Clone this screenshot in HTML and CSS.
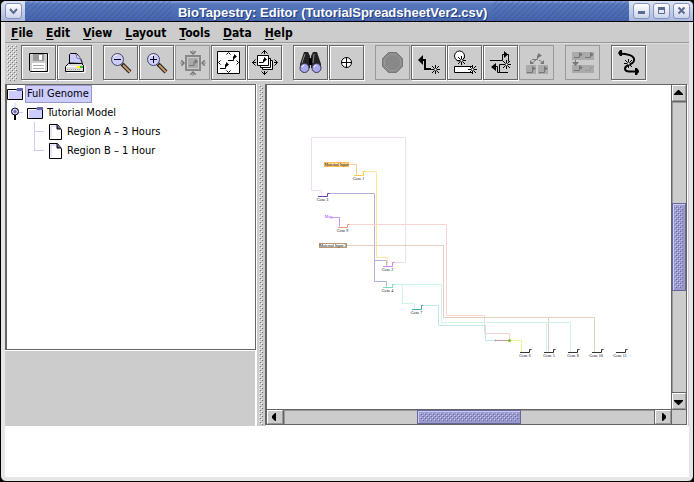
FILE: index.html
```
<!DOCTYPE html>
<html lang="en">
<head>
    <meta charset="UTF-8">
    <meta name="viewport" content="width=device-width, initial-scale=1.0">
    <title>BioTapestry: Editor (TutorialSpreadsheetVer2.csv)</title>
    <link rel="stylesheet" href="styles.css">
</head>
<body>
    <div class="window">
        <header class="titlebar">
            <div class="caps">
                <button class="cap" aria-label="Window menu"><svg viewBox="0 0 15 14"><path d="M4 5l3.500 4L11 5" fill="none" stroke="#5c6a94" stroke-width="2"/></svg></button>
            </div>
            <div class="hatch hatch-left"></div>
            <h1>BioTapestry: Editor (TutorialSpreadsheetVer2.csv)</h1>
            <div class="hatch hatch-right"></div>
            <div class="caps">
                <button class="cap" aria-label="Minimize"><svg viewBox="0 0 15 14"><path d="M4 7h7v3H4z" fill="#5c6a94"/></svg></button>
                <button class="cap" aria-label="Maximize"><svg viewBox="0 0 15 14"><path d="M4.500 4v5.500h6V4" fill="none" stroke="#5c6a94"/><path d="M4 3h7v3H4z" fill="#5c6a94"/></svg></button>
                <button class="cap" aria-label="Close"><svg viewBox="0 0 15 14"><path d="M4.500 3.500l6 6m0-6l-6 6" stroke="#5c6a94" stroke-width="2"/></svg></button>
            </div>
        </header>

        <div class="client">
            <nav class="menubar">
                <button><u>F</u>ile</button>
                <button><u>E</u>dit</button>
                <button><u>V</u>iew</button>
                <button><u>L</u>ayout</button>
                <button><u>T</u>ools</button>
                <button><u>D</u>ata</button>
                <button><u>H</u>elp</button>
            </nav>

            <div class="toolbar">
                <div class="grip"></div>
                <div class="group">
                    <button aria-label="Save">
                        <svg viewBox="0 0 33 33">
                            <path d="M7.500 7.500h18v18h-17l-1-1z" fill="#ccc" stroke="#000"/>
                            <path d="M11 8h11v7H11z" fill="#999"/><path d="M17 9h3v5h-3z" fill="#fff"/>
                            <path d="M10 17h13v8H10z" fill="#fff"/><path d="M11 19.500h11M11 22.500h11" stroke="#aaa"/>
                            <path d="M26.500 8v18.500H9" fill="none" stroke="#fff"/>
                        </svg>
                    </button>
                    <button aria-label="Print">
                        <svg viewBox="0 0 33 33">
                            <path d="M11.500 17V8.500l1-1h6l4 5 2 5z" fill="#ccf" stroke="#000"/>
                            <path d="M18 8l1 4 4 1" fill="#fff" stroke="#66c"/>
                            <path d="M10.500 17.500h13l2 2v6h-18v-5z" fill="#ddd" stroke="#000"/>
                            <path d="M8 20.500h17" stroke="#fff"/><path d="M9 23.500h14" stroke="#999" stroke-dasharray="1 1"/>
                            <path d="M19 20h4v2h-4z" fill="#ff0"/><path d="M22 20h3v2h-3z" fill="#3b3"/>
                            <path d="M27 19v7.500H9" fill="none" stroke="#fff"/>
                        </svg>
                    </button>
                </div>
                <div class="group">
                    <button aria-label="Zoom out">
                        <svg viewBox="0 0 33 33">
                            <path d="M18 18l8 8" stroke="#222" stroke-width="4"/><path d="M19 19l7 7" stroke="#c96" stroke-width="2"/>
                            <circle cx="13.500" cy="13.500" r="6" fill="#ccf" stroke="#446"/><path d="M9.500 11a5 5 0 0 1 4-2" fill="none" stroke="#fff"/>
                            <path d="M10 13.500h7" stroke="#000"/>
                        </svg>
                    </button>
                    <button aria-label="Zoom in">
                        <svg viewBox="0 0 33 33">
                            <path d="M18 18l8 8" stroke="#222" stroke-width="4"/><path d="M19 19l7 7" stroke="#c96" stroke-width="2"/>
                            <circle cx="13.500" cy="13.500" r="6" fill="#ccf" stroke="#446"/><path d="M9.500 11a5 5 0 0 1 4-2" fill="none" stroke="#fff"/>
                            <path d="M10 13.500h7M13.500 10v7" stroke="#000"/>
                        </svg>
                    </button>
                    <button aria-label="Zoom to selection" disabled>
                        <svg viewBox="0 0 33 33">
                            <path d="M10 10h14v14H10z" fill="none" stroke="#888" stroke-width="2"/>
                            <path d="M12 12h10v10H12z" fill="#aaa"/><path d="M13 19.500h5v-4h1" fill="none" stroke="#777"/><path d="M19 13l3 2.500-3 2.500z" fill="#777"/>
                            <path d="M17 4v3M17 30v-3M4 17h3M30 17h-3" stroke="#888"/>
                            <path d="M14 5h1l2 2 2-2h1v1l-3 3-3-3zM14 29h1l2-2 2 2h1v-1l-3-3-3 3zM5 14v1l2 2-2 2v1h1l3-3-3-3zM29 14v1l-2 2 2 2v1h-1l-3-3 3-3z" fill="#777"/>
                        </svg>
                    </button>
                    <button aria-label="Zoom to model">
                        <svg viewBox="0 0 33 33">
                            <path d="M5.500 5.500h22v22h-22z" fill="#fff" stroke="#000"/>
                            <path d="M16 14.500h5.500v-4h1M8 22.500h5.500v-4h1" fill="none" stroke="#000"/>
                            <path d="M22 8l3 2.500-3 2.500zM14 16l3 2.500-3 2.500z"/>
                            <path d="M14.500 8.500l2-2 2 2M14.500 24.500l2 2 2-2M8.500 14.500l-2 2 2 2M24.500 14.500l2 2-2 2" fill="none" stroke="#000"/>
                        </svg>
                    </button>
                    <button aria-label="Zoom to all models">
                        <svg viewBox="0 0 33 33">
                            <path d="M14.500 14.500h10v9h-10z" fill="#fff" stroke="#000"/>
                            <path d="M12.500 12.500h10v9h-10z" fill="#fff" stroke="#000"/>
                            <path d="M9.500 9.500h11v10h-11z" fill="#fff" stroke="#000"/>
                            <path d="M11 16.500h4.500v-3h1" fill="none" stroke="#000"/><path d="M16 11l3 2.500-3 2.500z"/>
                            <path d="M16.500 4v4M16.500 29v-4M4 16.500h4M29 16.500h-3" stroke="#000"/>
                            <path d="M13.500 7.500l3-3 3 3M13.500 25.500l3 3 3-3M7.500 13.500l-3 3 3 3M26.500 13.500l3 3-3 3" fill="none" stroke="#000"/>
                        </svg>
                    </button>
                </div>
                <div class="group">
                    <button aria-label="Search">
                        <svg viewBox="0 0 33 33">
                            <path d="M10 6h4l2 4v12H6v-4zM19 6h4l4 12v4H17V10z" fill="#222"/><path d="M15 12h3v7h-3z" fill="#000"/>
                            <path d="M11 8l-3 9M20 8l-1 9" stroke="#888"/>
                            <circle cx="10.500" cy="22" r="4.500" fill="#aae" stroke="#335"/><circle cx="22.500" cy="22" r="4.500" fill="#aae" stroke="#335"/>
                            <path d="M8 21l2-2M20 21l2-2" stroke="#fff"/>
                        </svg>
                    </button>
                    <button aria-label="Center on selected">
                        <svg viewBox="0 0 33 33">
                            <circle cx="16.500" cy="16.500" r="5" fill="#fff" stroke="#000"/>
                            <path d="M11 16.500h11M16.500 11v11" stroke="#000"/>
                        </svg>
                    </button>
                </div>
                <div class="group">
                    <button aria-label="Cancel add" disabled>
                        <svg viewBox="0 0 33 33">
                            <path d="M12.500 6.500h8l6 6v8l-6 6h-8l-6-6v-8z" fill="#888" stroke="#777"/>
                            <path d="M13.500 8.500h6l5 5v6l-5 5h-6l-5-5v-6z" fill="none" stroke="#999"/>
                        </svg>
                    </button>
                    <button aria-label="Add gene">
                        <svg viewBox="0 0 33 33">
                            <path d="M10 13h4v9h5v2h-7v-9h-2z"/><path d="M11 9v10l-5-5z"/>
                            <path d="M23.500 19v9M19 23.500h9M20 20l7 7m0-7l-7 7" stroke="#000"/><path d="M22.500 22.500h2v2h-2z" fill="#fff"/>
                        </svg>
                    </button>
                    <button aria-label="Add node">
                        <svg viewBox="0 0 33 33">
                            <circle cx="11.500" cy="10" r="5" fill="#fff" stroke="#000"/>
                            <path d="M6.500 20.500h18v6h-18z" fill="#fff" stroke="#000"/>
                            <path d="M13.500 10v9M9 14.500h9M10 11l7 7m0-7l-7 7M24.500 19v9M20 23.500h9M21 20l7 7m0-7l-7 7" stroke="#000"/>
                            <path d="M12.500 13.500h2v2h-2zM23.500 22.500h2v2h-2z" fill="#fff"/>
                        </svg>
                    </button>
                    <button aria-label="Add link">
                        <svg viewBox="0 0 33 33">
                            <path d="M6 14.500h12.500v-6h6v7M11 20.500h2.500v6H24M15.500 27v-8.500h5" fill="none" stroke="#000"/>
                            <path d="M20 5v7l4-3.500zM12 17v8l-5-4z"/>
                            <path d="M22.500 14v9M18 18.500h9M19 15l7 7m0-7l-7 7" stroke="#000"/><path d="M21.500 17.500h2v2h-2z" fill="#fff"/>
                        </svg>
                    </button>
                    <button aria-label="Propagate down" disabled>
                        <svg viewBox="0 0 33 33">
                            <path d="M6 19h10v9H6zM18 19h10v9H18z" fill="#aaa"/>
                            <path d="M12 13.500h5.500v-4h1M16 14l-4 3M19 14l4 3M7 26.500h5.500v-4M19 26.500h5.500v-4" fill="none" stroke="#777"/>
                            <path d="M18 7l4 2.500-4 2.500zM10 14v4h4zM24 14v4h-4zM12 20l4 2.500-4 2.500zM24 20l4 2.500-4 2.500z" fill="#777"/>
                        </svg>
                    </button>
                </div>
                <div class="group">
                    <button aria-label="Pull down" disabled>
                        <svg viewBox="0 0 33 33">
                            <path d="M6 6h22v8H6zM6 19h22v8H6z" fill="#aaa"/>
                            <path d="M8 11.500h5.500v-3M19 11.500h5.500v-3M9.500 14v5M8 24.500h5.500v-3" fill="none" stroke="#777"/>
                            <path d="M13 6l4 2.500-4 2.500zM24 6l4 2.500-4 2.500zM6 16h7l-3.500 4zM13 19l4 2.500-4 2.500z" fill="#777"/>
                            <path d="M19 24.500h5.500v-3h2" fill="none" stroke="#999"/>
                        </svg>
                    </button>
                </div>
                <div class="group">
                    <button aria-label="Relayout link">
                        <svg viewBox="0 0 33 33">
                            <path d="M7 7.500c8 0 16 2 15 7 0 4-9 4-9 8s5 3 14 3" fill="none" stroke="#000" stroke-width="2"/>
                            <path d="M8 4h2v6H8L6 7zM23 22h2l2 3-2 4h-2z"/>
                            <path d="M16.500 13v9M12 17.500h9M13 14l7 7m0-7l-7 7" stroke="#000"/><path d="M15.500 16.500h2v2h-2z" fill="#fff"/>
                        </svg>
                    </button>
                </div>
            </div>

            <main class="workspace">
                <section class="sidebar">
                    <ul class="tree">
                        <li>
                            <div class="node root">
                                <svg class="folder" viewBox="0 0 16 14"><path d="M.500 2.500h9l1-1h5v11H.500z" fill="#ccf" stroke="#000"/><path d="M10 1h6v3H9z" fill="#66a"/><path d="M1.500 12V3.500h8" fill="none" stroke="#fff"/></svg>
                                <span class="selected">Full Genome</span>
                            </div>
                            <ul class="models">
                                <li>
                                    <div class="node">
                                        <svg class="handle" viewBox="0 0 16 19"><path d="M8 0v4M10 9.500h6" stroke="#ccf"/><path d="M7 12h2v5H7z"/><circle cx="8" cy="8.500" r="3.500" fill="#ccf" stroke="#000"/><circle cx="8" cy="8.500" r="1.500" fill="#66a"/></svg>
                                        <svg class="folder" viewBox="0 0 16 14"><path d="M.500 2.500h9l1-1h5v11H.500z" fill="#ccf" stroke="#000"/><path d="M10 1h6v3H9z" fill="#66a"/><path d="M1.500 12V3.500h8" fill="none" stroke="#fff"/></svg>
                                        <span>Tutorial Model</span>
                                    </div>
                                    <ul class="regions">
                                        <li class="node">
                                            <svg class="page" viewBox="0 0 13 16"><path d="M.500.500h8l4 5v10H.500z" fill="#fff" stroke="#000"/><path d="M2 14V2h5" fill="none" stroke="#ccf"/><path d="M8 1v4h4" fill="#66a" stroke="#000"/></svg>
                                            <span>Region A – 3 Hours</span>
                                        </li>
                                        <li class="node">
                                            <svg class="page" viewBox="0 0 13 16"><path d="M.500.500h8l4 5v10H.500z" fill="#fff" stroke="#000"/><path d="M2 14V2h5" fill="none" stroke="#ccf"/><path d="M8 1v4h4" fill="#66a" stroke="#000"/></svg>
                                            <span>Region B – 1 Hour</span>
                                        </li>
                                    </ul>
                                </li>
                            </ul>
                        </li>
                    </ul>
                    <div class="navigator"></div>
                </section>

                <div class="divider"></div>

                <section class="canvas">
                    <svg class="network" viewBox="267 85 404 324">
                        <g class="links">
                            <path stroke="#eedcf2" d="M393 262.500h12.500v-125h-94v53h10v5"/>
                            <path stroke="#fc9" d="M349 164.500h7.500v10"/>
                            <path stroke="#ffe699" d="M364 171.500h12.500v86h11v8"/>
                            <path stroke="#b3b0d9" d="M328 193.500h46.500v88h12v5M374.500 260.500h12v5"/>
                            <path stroke="#c9f" d="M332 217.500h7.500v9"/>
                            <path stroke="#fad4d0" d="M348 224.500h98.500v91h38v18h25v7"/>
                            <path stroke="#e3cfbd" d="M347 245.500h96.500v72h151v34M548.500 317.500v34"/>
                            <path stroke="#cff5e6" d="M393 284.500h48.500v38h129v29M546.500 322.500v29M402.500 284.500v19h12v5"/>
                            <path stroke="#c4e6ee" d="M422 305.500h16.500v20h47v15h10"/>
                            <path stroke="#c99" d="M496 340.500h13"/>
                            <path stroke="#df8" d="M510 340.500h11.500v11"/>
                        </g>
                        <g class="genes">
                            <path stroke="#fc4" d="M354 175.500h9.500v-4h2"/>
                            <path stroke="#64a" d="M318 196.500h9.500v-3h2"/>
                            <path stroke="#e98" d="M338 227.500h9.500v-3h2"/>
                            <path stroke="#c8e" d="M383 266.500h9.500v-4h2"/>
                            <path stroke="#7db" d="M383 287.500h9.500v-3h2"/>
                            <path stroke="#4ab" d="M412 309.500h9.500v-4h2"/>
                            <path stroke="#333" d="M520 352.500h9.500v-3h2M544 352.500h9.500v-3h2M568 352.500h9.500v-3h2M592 352.500h9.500v-3h2M616 352.500h9.500v-3h2"/>
                        </g>
                        <circle cx="495.500" cy="340.500" r="1" fill="#aaa"/>
                        <circle cx="509.500" cy="340.500" r="1.500" fill="#8b2"/>
                        <rect x="324.500" y="162.500" width="24" height="4" fill="#fd9" stroke="#fb5"/>
                        <rect x="319.500" y="243.500" width="27" height="4" fill="#fff" stroke="#b97"/>
                        <g class="labels">
                            <text x="336.500" y="166">Maternal Input</text>
                            <text x="358.500" y="180">Gene 1</text>
                            <text x="322.500" y="201">Gene 3</text>
                            <text x="328.500" y="218" fill="#93f">Mag</text>
                            <text x="342.500" y="232">Gene 9</text>
                            <text x="333" y="247">Maternal Input 2</text>
                            <text x="387.500" y="271">Gene 2</text>
                            <text x="387.500" y="292">Gene 4</text>
                            <text x="416.500" y="314">Gene 7</text>
                            <text x="525" y="357">Gene 6</text>
                            <text x="549" y="357">Gene 5</text>
                            <text x="573" y="357">Gene 8</text>
                            <text x="596" y="357">Gene 10</text>
                            <text x="620" y="357">Gene 11</text>
                        </g>
                    </svg>
                    <div class="scroll vertical">
                        <button aria-label="Scroll up"><svg viewBox="0 0 12 14"><path d="M1 9h9V8L6 4H5L1 8z"/></svg></button>
                        <div class="track"><div class="thumb"></div></div>
                        <button aria-label="Scroll down"><svg viewBox="0 0 12 14"><path d="M1 6h9v1l-4 4H5L1 7z"/></svg></button>
                    </div>
                    <div class="scroll horizontal">
                        <button aria-label="Scroll left"><svg viewBox="0 0 14 12"><path d="M8 2v8H7L4 7V5l3-3z"/></svg></button>
                        <div class="track"><div class="thumb"></div></div>
                        <button aria-label="Scroll right"><svg viewBox="0 0 14 12"><path d="M6 2v8h1l3-3V5L7 2z"/></svg></button>
                    </div>
                    <div class="corner"></div>
                </section>
            </main>
            <footer class="message"></footer>
        </div>
    </div>
</body>
</html>
```
FILE: styles.css
```
* {
    box-sizing: border-box;
}
body {
    margin: 0;
    background: #000;
    color: #000;
    font-family: "DejaVu Sans Condensed", "DejaVu Sans", sans-serif;
    font-size: 11px;
}
button {
    margin: 0;
    padding: 0;
    border: 0;
    font: inherit;
    color: inherit;
    background: #ccc;
}
svg {
    display: block;
}
ul {
    list-style: none;
    margin: 0;
    padding: 0;
}
.window {
    display: flex;
    flex-direction: column;
    min-height: 100vh;
    border: 1px solid #000;
    border-radius: 6px;
    background: #e6e6e6;
    overflow: hidden;
}

/* title bar */
.titlebar {
    display: flex;
    height: 21px;
    border-bottom: 1px solid #000;
    background: linear-gradient(#88a4dc, #5878bc 3px, #4464ac);
}
.titlebar h1 {
    margin: 0;
    padding: 0 6px;
    font-family: "Liberation Sans", Arial, sans-serif;
    font-size: 13px;
    line-height: 23px;
    color: #fff;
    text-shadow: 1px 1px #223a78;
    white-space: nowrap;
}
.hatch {
    background: repeating-linear-gradient(135deg, transparent 0, transparent 2px, #36529480 3px, transparent 4px);
}
.hatch-left {
    flex: 13;
}
.hatch-right {
    flex: 12;
}
.caps {
    display: flex;
    gap: 3px;
    padding: 2px 3px 2px 4px;
    background: linear-gradient(#dde3f2, #aab8dc);
}
.cap {
    width: 17px;
    height: 16px;
    border: 1px solid #8494c0;
    border-radius: 3px;
    background: linear-gradient(#fff, #ccd4ea);
}

/* menu and tool bars */
.client {
    flex: 1;
    display: flex;
    flex-direction: column;
    margin: 0 4px 4px;
    background: #ccc;
}
.menubar {
    display: flex;
    gap: 13px;
    height: 21px;
    padding: 1px 6px 0;
    border-bottom: 1px solid #999;
}
.menubar button {
    font-weight: bold;
    font-size: 12px;
}
.menubar u {
    text-underline-offset: 2px;
}
.toolbar {
    display: flex;
    gap: 11px;
    height: 41px;
    padding: 1px 2px;
    border-top: 1px solid #ddd;
}
.grip {
    width: 10px;
    height: 36px;
    margin-right: -7px;
}
.grip, .divider, .thumb::before {
    background-image:
        conic-gradient(at 1px 1px, transparent 75%, #fff 0),
        conic-gradient(at 1px 1px, transparent 75%, #fff 0),
        conic-gradient(at 1px 1px, transparent 75%, #777 0),
        conic-gradient(at 1px 1px, transparent 75%, #777 0);
    background-size: 4px 4px;
    background-position: 0 0, 2px 2px, 1px 1px, 3px 3px;
    background-clip: content-box;
    background-origin: content-box;
}
.group {
    display: flex;
    gap: 1px;
}
.toolbar button {
    width: 35px;
    height: 35px;
    border: 1px solid #666;
    box-shadow: inset 1px 1px #fff, 1px 1px #fff;
}
.toolbar button:disabled {
    border-color: #999;
    box-shadow: none;
}

/* split pane */
.workspace {
    flex: 1;
    display: flex;
}
.sidebar {
    display: flex;
    flex-direction: column;
    width: 251px;
}
.tree {
    flex: 1;
    border: 1px solid #666;
    border-left-width: 2px;
    background: #fff;
}
.navigator {
    height: 76px;
    border-top: 1px solid #fff;
    border-right: 1px solid #fff;
}
.node {
    display: flex;
    align-items: center;
    gap: 4px;
    height: 19px;
}
.root {
    height: 18px;
}
.selected {
    margin-left: -2px;
    padding: 0 2px 0 1px;
    border: 1px solid #99c;
    background: #ccf;
    line-height: 16px;
}
.folder {
    width: 16px;
    height: 14px;
}
.handle {
    width: 16px;
    height: 19px;
}
.regions {
    margin-left: 27px;
    background: linear-gradient(#ccf, #ccf) 0 0 / 1px 29px no-repeat;
}
.regions .node {
    gap: 5px;
    padding-left: 15px;
    background: linear-gradient(#ccf, #ccf) 0 9px / 10px 1px no-repeat;
}
.page {
    width: 13px;
    height: 16px;
}
.divider {
    width: 9px;
    padding: 1px 2px;
    border-left: 1px solid #fff;
}
.canvas {
    flex: 1;
    display: grid;
    grid-template-columns: minmax(0, 1fr) 15px;
    grid-template-rows: minmax(0, 1fr) 15px;
    margin: 0 2px 1px 0;
    border: 1px solid #666;
    border-left-width: 2px;
    box-shadow: 1px 1px #fff;
}
.network {
    width: 100%;
    height: 100%;
    background: #fff;
}
.links, .genes {
    fill: none;
}
.labels {
    font-family: "Liberation Serif", serif;
    font-size: 4px;
    text-anchor: middle;
}

/* scroll bars */
.scroll {
    display: flex;
    border: 0 solid #666;
}
.vertical {
    flex-direction: column;
    border-left-width: 1px;
}
.horizontal {
    border-top-width: 1px;
}
.scroll button {
    flex: none;
    border: 1px solid #fff;
    border-right-color: #999;
    border-bottom-color: #999;
}
.vertical button {
    height: 16px;
}
.horizontal button {
    width: 16px;
}
.track {
    flex: 1;
    display: grid;
    border: 0 solid #666;
}
.vertical .track {
    grid-template-rows: 102fr 88fr 102fr;
    border-width: 1px 0;
    box-shadow: inset 1px 1px #999;
}
.horizontal .track {
    grid-template-columns: 134fr 104fr 134fr;
    border-width: 0 1px;
    box-shadow: inset 1px 1px #999;
}
.thumb {
    display: grid;
    padding: 2px;
    border: 1px solid #669;
    background: #99c;
    box-shadow: inset 1px 1px #ccf;
}
.thumb::before {
    content: "";
    background-image:
        conic-gradient(at 1px 1px, transparent 75%, #ccf 0),
        conic-gradient(at 1px 1px, transparent 75%, #ccf 0),
        conic-gradient(at 1px 1px, transparent 75%, #669 0),
        conic-gradient(at 1px 1px, transparent 75%, #669 0);
}
.vertical .thumb {
    grid-row: 2;
}
.horizontal .thumb {
    grid-column: 2;
}
.corner {
    border-top: 1px solid #666;
    border-left: 1px solid #666;
}
.message {
    height: 51px;
    background: #fff;
}
```
